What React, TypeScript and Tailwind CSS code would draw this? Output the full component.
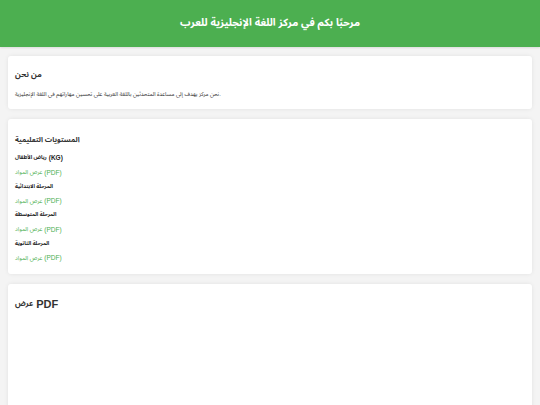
import React from "react";

const levels: { ar: string; en?: string }[] = [
  { ar: "رياض الأطفال", en: "(KG)" },
  { ar: "المرحلة الابتدائية" },
  { ar: "المرحلة المتوسطة" },
  { ar: "المرحلة الثانوية" },
];

export default function App() {
  return (
    <div className="min-h-[405px] bg-[#f4f4f4] text-[#333] [font-family:'Liberation_Sans','Noto_Sans_Arabic','Noto_Naskh_Arabic','DejaVu_Sans',Arial,sans-serif]">
      <header className="flex h-[47px] items-center justify-center bg-[#4CAF50] text-white shadow-[0_1px_2px_rgba(0,0,0,0.1)]">
        <h1 className="text-[10.4px] font-bold leading-none">مرحبًا بكم في مركز اللغة الإنجليزية للعرب</h1>
      </header>
      <main className="flex flex-col gap-[10px] px-[8px] pt-[9px]">
        <section className="h-[53px] rounded-[3px] bg-white px-[7px] pt-[13px] shadow-[0_0_4px_rgba(0,0,0,0.08)]">
          <h2 className="text-[7.8px] font-bold leading-[12px]">من نحن</h2>
          <p className="mt-[9px] text-[5.6px] leading-[8px] text-[#333]">
            نحن مركز يهدف إلى مساعدة المتحدثين باللغة العربية على تحسين مهاراتهم في اللغة الإنجليزية.
          </p>
        </section>
        <section className="h-[155px] rounded-[3px] bg-white px-[7px] pt-[15px] shadow-[0_0_4px_rgba(0,0,0,0.08)]">
          <h2 className="text-[7.2px] font-bold leading-[12px]">المستويات التعليمية</h2>
          <ul className="mt-[5px] flex flex-col">
            {levels.map((l) => (
              <li key={l.ar} className="flex flex-col">
                <span className="flex h-[14.3px] items-center gap-[2px] text-[5.3px] font-bold text-[#222]">
                  <span>{l.ar}</span>
                  {l.en && <span className="text-[6.5px]">{l.en}</span>}
                </span>
                <a className="flex h-[14.3px] items-center gap-[2px] text-[5.8px] text-[#4CAF50]">
                  <span>عرض المواد</span>
                  <span className="text-[6.5px]">(PDF)</span>
                </a>
              </li>
            ))}
          </ul>
        </section>
        <section className="h-[140px] rounded-t-[3px] bg-white px-[7px] pt-[14px] shadow-[0_0_4px_rgba(0,0,0,0.08)]">
          <h2 className="flex items-center gap-[3px] font-bold leading-[12px]">
            <span className="text-[7.6px]">عرض</span>
            <span className="text-[11px]">PDF</span>
          </h2>
        </section>
      </main>
    </div>
  );
}
